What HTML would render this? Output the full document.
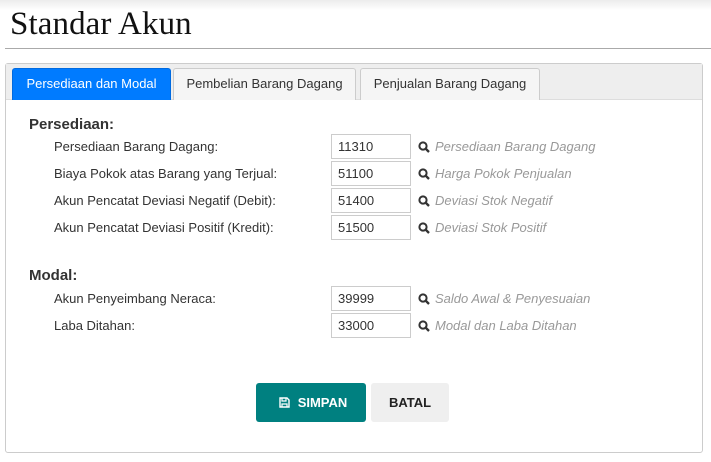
<!DOCTYPE html>
<html><head><meta charset="utf-8"><style>
*{box-sizing:border-box;margin:0;padding:0}
body{width:711px;height:462px;background:#fff;font-family:"Liberation Sans",sans-serif;position:relative;overflow:hidden;color:#333}
.top{position:absolute;left:0;top:0;width:711px;height:10px;background:linear-gradient(#ececec,#fff)}
h1{position:absolute;left:10px;top:6px;font-family:"Liberation Serif",serif;font-weight:normal;font-size:33px;color:#111;letter-spacing:0.1px}
.hr{position:absolute;left:5px;top:48px;width:706px;height:1px;background:#aaa}
.panel{position:absolute;left:5px;top:63px;width:698px;height:390px;border:1px solid #ccc;border-radius:3px}
.tabbar{position:absolute;left:0;top:0;width:696px;height:36px;background:#eee;border-bottom:1px solid #ddd}
.tab{position:absolute;top:4px;height:32px;border:1px solid #ccc;border-bottom:none;border-radius:3px 3px 0 0;background:#f5f5f5;font-size:13px;line-height:30px;text-align:center;color:#333}
.tab.a{background:#007bff;border-color:#006ae0;color:#fff}
.h{position:absolute;left:23px;font-weight:bold;font-size:15px;color:#333}
.l{position:absolute;left:48px;font-size:13px;color:#333}
.i{position:absolute;left:325px;width:80px;height:25px;border:1px solid #ccc;font-size:13px;line-height:23px;padding-left:6px;color:#333}
.s{position:absolute;left:412px;font-size:13px;color:#999;font-style:italic}
.s svg{vertical-align:-2px;margin-right:5px}
.b{position:absolute;top:319px;height:39px;border-radius:3px;font-weight:bold;font-size:13px;line-height:39px;text-align:center}
</style></head><body>
<div class="top"></div>
<h1>Standar Akun</h1>
<div class="hr"></div>
<div class="panel">
<div class="tabbar">
<div class="tab a" style="left:6px;width:159px">Persediaan dan Modal</div>
<div class="tab" style="left:167px;width:183px">Pembelian Barang Dagang</div>
<div class="tab" style="left:354px;width:180px">Penjualan Barang Dagang</div>
</div>
<div class="h" style="top:52px">Persediaan:</div>
<div class="l" style="top:75px">Persediaan Barang Dagang:</div>
<div class="l" style="top:102px">Biaya Pokok atas Barang yang Terjual:</div>
<div class="l" style="top:129px">Akun Pencatat Deviasi Negatif (Debit):</div>
<div class="l" style="top:156px">Akun Pencatat Deviasi Positif (Kredit):</div>
<div class="i" style="top:70px">11310</div>
<div class="i" style="top:97px">51100</div>
<div class="i" style="top:124px">51400</div>
<div class="i" style="top:151px">51500</div>
<div class="s" style="top:75px"><svg width="12" height="12" viewBox="0 0 12 12"><circle cx="5" cy="5" r="3.6" fill="none" stroke="#333" stroke-width="2"/><path d="M7.5 7.5L11 11" stroke="#333" stroke-width="2.3"/></svg>Persediaan Barang Dagang</div>
<div class="s" style="top:102px"><svg width="12" height="12" viewBox="0 0 12 12"><circle cx="5" cy="5" r="3.6" fill="none" stroke="#333" stroke-width="2"/><path d="M7.5 7.5L11 11" stroke="#333" stroke-width="2.3"/></svg>Harga Pokok Penjualan</div>
<div class="s" style="top:129px"><svg width="12" height="12" viewBox="0 0 12 12"><circle cx="5" cy="5" r="3.6" fill="none" stroke="#333" stroke-width="2"/><path d="M7.5 7.5L11 11" stroke="#333" stroke-width="2.3"/></svg>Deviasi Stok Negatif</div>
<div class="s" style="top:156px"><svg width="12" height="12" viewBox="0 0 12 12"><circle cx="5" cy="5" r="3.6" fill="none" stroke="#333" stroke-width="2"/><path d="M7.5 7.5L11 11" stroke="#333" stroke-width="2.3"/></svg>Deviasi Stok Positif</div>
<div class="h" style="top:203px">Modal:</div>
<div class="l" style="top:227px">Akun Penyeimbang Neraca:</div>
<div class="l" style="top:254px">Laba Ditahan:</div>
<div class="i" style="top:222px">39999</div>
<div class="i" style="top:249px">33000</div>
<div class="s" style="top:227px"><svg width="12" height="12" viewBox="0 0 12 12"><circle cx="5" cy="5" r="3.6" fill="none" stroke="#333" stroke-width="2"/><path d="M7.5 7.5L11 11" stroke="#333" stroke-width="2.3"/></svg>Saldo Awal &amp; Penyesuaian</div>
<div class="s" style="top:254px"><svg width="12" height="12" viewBox="0 0 12 12"><circle cx="5" cy="5" r="3.6" fill="none" stroke="#333" stroke-width="2"/><path d="M7.5 7.5L11 11" stroke="#333" stroke-width="2.3"/></svg>Modal dan Laba Ditahan</div>
<div class="b" style="left:250px;width:110px;background:#008080;color:#fff;padding-left:4px"><svg width="11" height="11" viewBox="0 0 11 11" style="vertical-align:-1px;margin-right:8px"><path d="M1 1h7l2 2v7H1z" fill="none" stroke="#fff" stroke-width="1.4"/><path d="M3 1v3h4V1M3 10V7h5v3" fill="none" stroke="#fff" stroke-width="1.2"/></svg>SIMPAN</div>
<div class="b" style="left:365px;width:78px;background:#efefef;color:#222">BATAL</div>
</div>
</body></html>
